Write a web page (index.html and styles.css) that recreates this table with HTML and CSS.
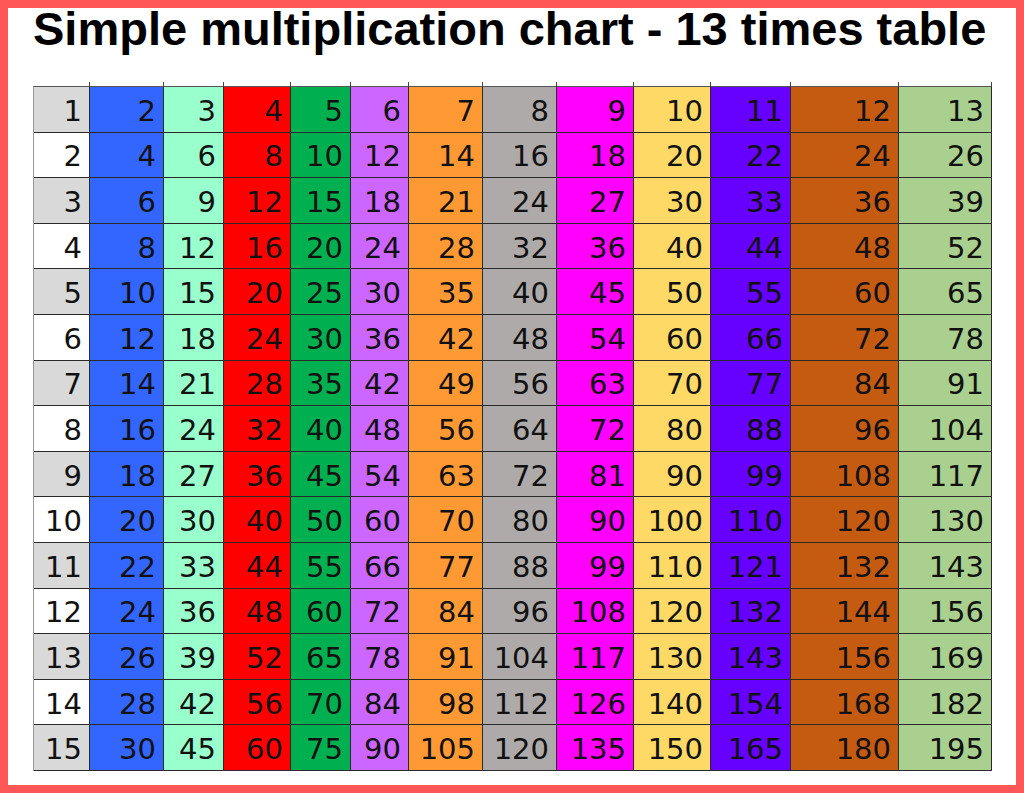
FILE: index.html
```html
<!DOCTYPE html>
<html>
<head>
<meta charset="utf-8">
<link rel="stylesheet" href="styles.css">
</head>
<body>
<div class="frame">
  <h1 class="title">Simple multiplication chart - 13 times table</h1>
  <div class="chart" id="chart"></div>
</div>
<script>
  var chart = document.getElementById('chart');
  var html = '';
  for (var r = 1; r <= 15; r++) {
    for (var c = 1; c <= 13; c++) {
      var cls = 'cell c' + c;
      if (c === 1 && r % 2 === 0) cls += ' alt';
      if (r === 1) cls += ' top';
      html += '<div class="' + cls + '">' + (r * c) + '</div>';
    }
  }
  chart.innerHTML = html;
</script>
</body>
</html>
```

FILE: styles.css
```css
html, body {
  margin: 0;
  padding: 0;
  background: #ffffff;
}

.frame {
  box-sizing: border-box;
  width: 1024px;
  height: 793px;
  border: 8px solid #ff5757;
  background: #ffffff;
  padding-left: 25px;
}

.title {
  margin: 0;
  padding-top: 1px;
  width: 952px;
  text-align: center;
  font-family: "Liberation Sans", Arial, sans-serif;
  font-weight: bold;
  font-size: 47px;
  line-height: 40px;
  color: #000;
  white-space: nowrap;
}

.chart {
  margin-top: 37px;
  display: grid;
  grid-template-columns: 56px 74px 60px 67px 60px 58px 74px 74px 77px 77px 80px 108px 93px;
  grid-auto-rows: 45.6px;
  width: 958px;
  border-top: 1px solid #555;
  border-left: 1px solid #999;
  box-sizing: border-box;
}

.cell {
  box-sizing: border-box;
  border-right: 1px solid #2a2a2a;
  border-bottom: 1px solid #2a2a2a;
  display: flex;
  align-items: center;
  justify-content: flex-end;
  padding-right: 7px;
  padding-top: 3px;
  font-family: "DejaVu Sans", sans-serif;
  font-size: 29px;
  color: #111;
}

.cell.top {
  position: relative;
}

.cell.top::after {
  content: "";
  position: absolute;
  top: -5px;
  right: -1px;
  width: 1px;
  height: 5px;
  background: #444;
}

.c1 { background: #d9d9d9; }
.c1.alt { background: #ffffff; }
.c2 { background: #3366ff; }
.c3 { background: #99ffcc; }
.c4 { background: #ff0000; }
.c5 { background: #00b050; }
.c6 { background: #cc66ff; }
.c7 { background: #ff9933; }
.c8 { background: #aeaaaa; }
.c9 { background: #ff00ff; }
.c10 { background: #ffd966; }
.c11 { background: #6600ff; }
.c12 { background: #c55a11; }
.c13 { background: #a9d08e; }
```
